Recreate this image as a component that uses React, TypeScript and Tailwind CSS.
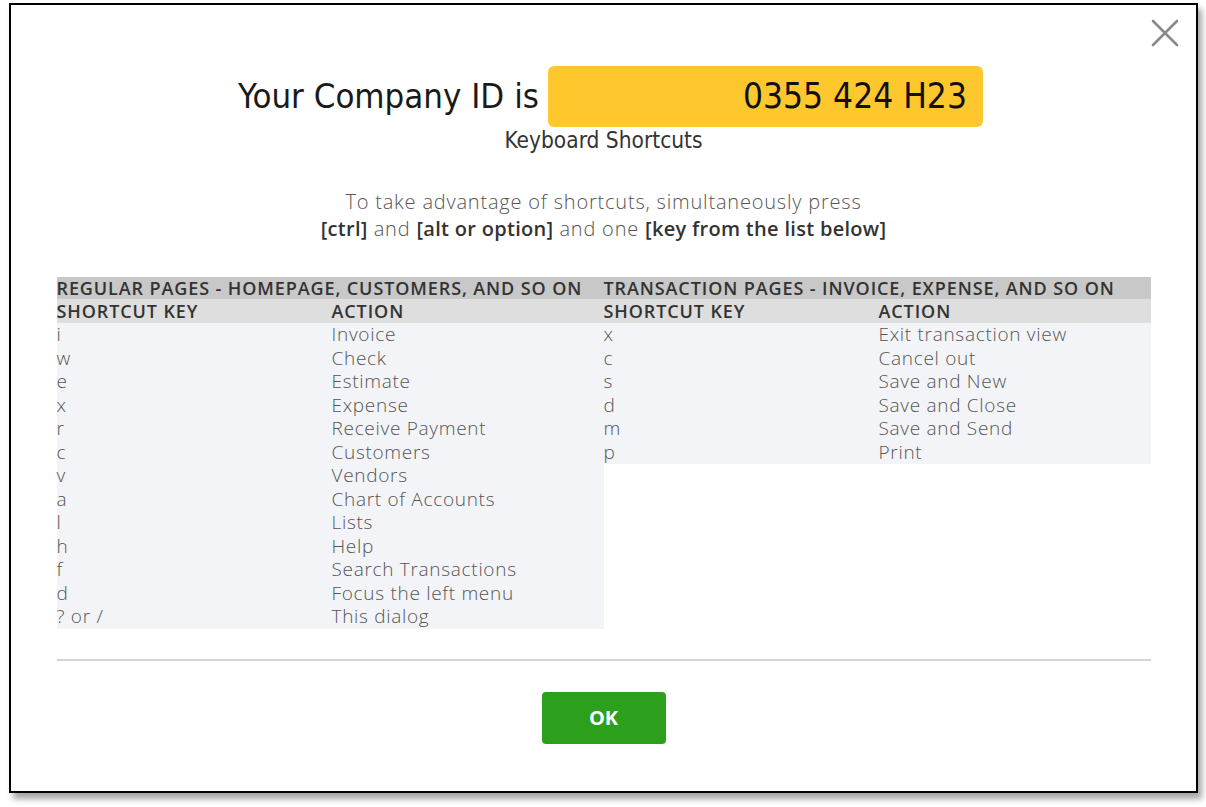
import React from "react";

const regular: [string, string][] = [
  ["i", "Invoice"],
  ["w", "Check"],
  ["e", "Estimate"],
  ["x", "Expense"],
  ["r", "Receive Payment"],
  ["c", "Customers"],
  ["v", "Vendors"],
  ["a", "Chart of Accounts"],
  ["l", "Lists"],
  ["h", "Help"],
  ["f", "Search Transactions"],
  ["d", "Focus the left menu"],
  ["? or /", "This dialog"],
];

const transaction: [string, string][] = [
  ["x", "Exit transaction view"],
  ["c", "Cancel out"],
  ["s", "Save and New"],
  ["d", "Save and Close"],
  ["m", "Save and Send"],
  ["p", "Print"],
];

function Column({ title, rows }: { title: string; rows: [string, string][] }) {
  return (
    <div className="flex flex-col w-[547px]">
      <div className="h-[22px] bg-[#c8c8c8] flex items-center text-[18px] tracking-[0.9px] font-semibold text-[#333] whitespace-nowrap leading-none">
        {title}
      </div>
      <div className="h-[24px] bg-[#dedede] flex items-center text-[18px] tracking-[0.9px] font-semibold text-[#333] leading-none">
        <div className="w-[275px]">SHORTCUT KEY</div>
        <div>ACTION</div>
      </div>
      {rows.map(([k, a], i) => (
        <div
          key={i}
          className="h-[23.5px] bg-[#f3f4f8] flex items-center text-[19px] tracking-[0.7px] font-light text-[#555] leading-none whitespace-nowrap"
        >
          <div className="w-[275px]">{k}</div>
          <div>{a}</div>
        </div>
      ))}
    </div>
  );
}

const condensed = { fontFamily: "'DejaVu Sans Condensed', 'DejaVu Sans', sans-serif" };

export default function App() {
  return (
    <div className="w-[1206px] h-[807px] bg-white relative">
      <div className="absolute left-[9px] top-[3px] w-[1189px] h-[790px] border-2 border-black bg-white shadow-[4px_6px_6px_rgba(0,0,0,0.35)]">
        <div className="absolute right-[16px] top-[13px]">
          <svg width="30" height="30" viewBox="0 0 30 30">
            <path d="M3 3 L27 27 M27 3 L3 27" stroke="#8a8a8a" strokeWidth="2.6" strokeLinecap="round" />
          </svg>
        </div>
        <div className="flex flex-col items-center" style={{ fontFamily: "'Open Sans', sans-serif" }}>
          <div className="flex items-center mt-[61px] ml-[14px]">
            <span className="text-[34.5px] text-[#1a1a1a] mr-[9px]" style={condensed}>
              Your Company ID is
            </span>
            <div className="w-[435px] h-[61px] bg-[#fec72e] rounded-[6px] flex items-center justify-end pr-[16px]">
              <span className="text-[35px] text-[#111]" style={condensed}>
                0355 424 H23
              </span>
            </div>
          </div>
          <div className="text-[22.5px] text-[#333] leading-[26px]" style={condensed}>
            Keyboard Shortcuts
          </div>
          <div className="mt-[35px] text-[20px] tracking-[0.8px] leading-[27px] text-[#555] font-light text-center">
            <div>To take advantage of shortcuts, simultaneously press</div>
            <div>
              <span className="font-semibold text-[#333] tracking-[0.3px]">[ctrl]</span> and{" "}
              <span className="font-semibold text-[#333] tracking-[0.3px]">[alt or option]</span> and one{" "}
              <span className="font-semibold text-[#333] tracking-[0.3px]">[key from the list below]</span>
            </div>
          </div>
          <div className="flex mt-[35px] items-start">
            <Column title="REGULAR PAGES - HOMEPAGE, CUSTOMERS, AND SO ON" rows={regular} />
            <Column title="TRANSACTION PAGES - INVOICE, EXPENSE, AND SO ON" rows={transaction} />
          </div>
          <div className="w-[1094px] h-[2px] bg-[#d4d4d4] mt-[30px]" />
          <button className="mt-[31px] w-[124px] h-[52px] bg-[#2ca01c] rounded-[4px] text-white text-[20px] font-bold">
            OK
          </button>
        </div>
      </div>
    </div>
  );
}
